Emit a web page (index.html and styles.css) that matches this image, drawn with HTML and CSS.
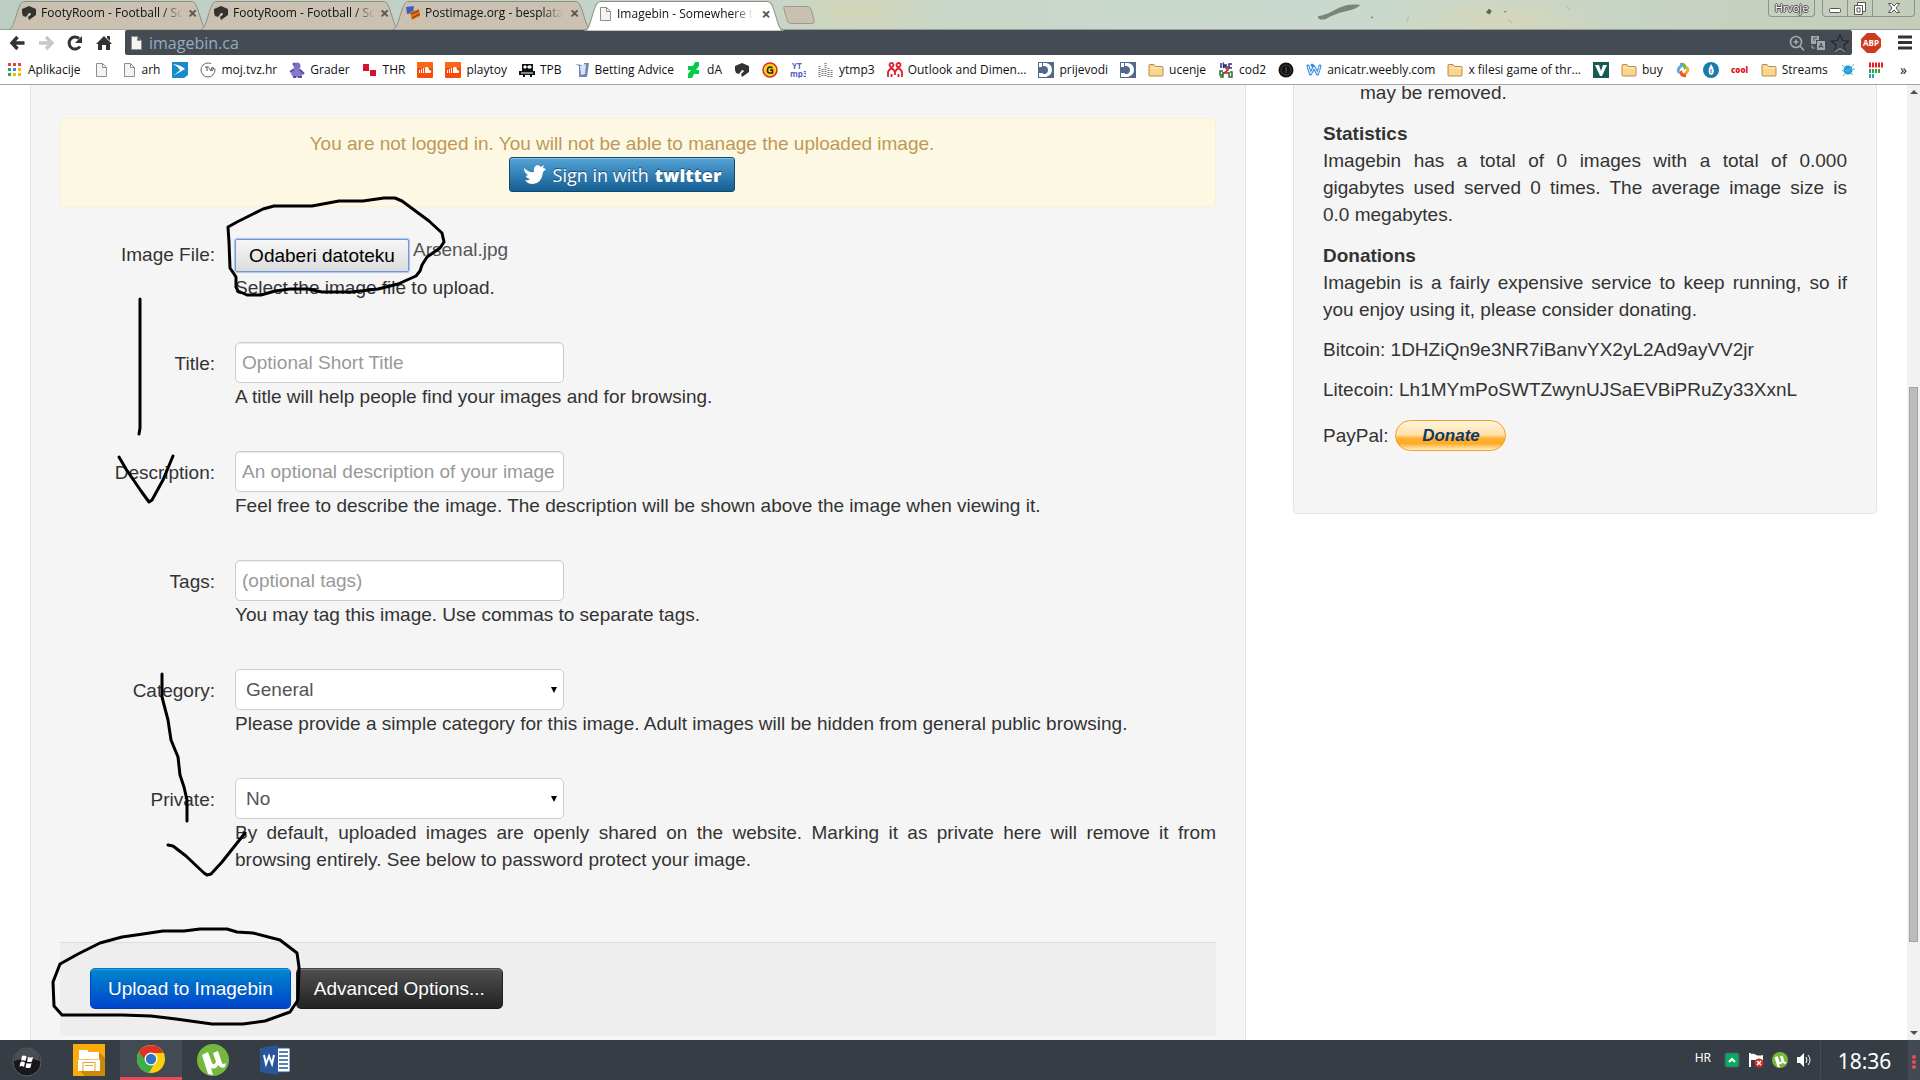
FILE: index.html
```html
<!DOCTYPE html>
<html lang="en">
<head>
<meta charset="utf-8">
<title>Imagebin - Somewhere to Store Random Things</title>
<link rel="stylesheet" href="styles.css">
</head>
<body>
<svg class="defs" aria-hidden="true">
  <symbol id="tab" viewBox="0 0 200 29" preserveAspectRatio="none"><path d="M0 29C5 28 6 21 9 12 12 3 13 .5 17 .5H183C187 .5 188 3 191 12 194 21 195 28 200 29Z"/></symbol>
  <symbol id="page" viewBox="0 0 16 16"><path d="M3.500 1.500H9.500L13.500 5.500V14.500H3.500ZM9.500 1.500V5.500H13.500" fill="#f4f4f4" stroke="#8d8d8d"/></symbol>
  <symbol id="footy" viewBox="0 0 16 16"><path d="M1 4L8 1 15 4V10L8 15 7 12 10 9 8 8 5 12 2 11 1 8Z" fill="#333"/><path d="M8 11L10 9 8 8Z" fill="#ddd"/></symbol>
  <symbol id="cloud" viewBox="0 0 16 16"><rect width="16" height="16" rx="1" fill="#f84a0c"/><path d="M0 0H16V6H0Z" fill="#ff7a22" opacity=".6"/><path d="M8 5.500C11 4 12 6 12 8 15 8 14.500 11 13 11H8ZM6 6H7V11H6ZM4 7H5V11H4ZM2 8H3V11H2Z" fill="#fff"/></symbol>
  <symbol id="folder" viewBox="0 0 16 16"><path d="M1 3.500Q1 2.500 2 2.500H6L7.500 4.500H14Q15 4.500 15 5.500V13Q15 14 14 14H2Q1 14 1 13Z" fill="#fbd58c" stroke="#b98a4c"/><path d="M2 6H14" stroke="#fff0c9"/></symbol>
  <symbol id="prij" viewBox="0 0 16 16"><rect width="16" height="16" fill="#51688c"/><path d="M1 1H4V5H1ZM5 1H8Q14 2 14 8 14 13 8 15H1V11H5V12H7Q10 11 10 8 10 5 7 4H5Z" fill="#fff"/></symbol>
  <symbol id="ut" viewBox="0 0 32 32"><circle cx="16" cy="16" r="16" fill="#76b83f"/><path d="M5 11L11 8 15 19Q17 22 19 18L16 9 21 7 25 19Q26 21 29 19L28 23Q24 25 21 21 19 26 14 24L16 31 11 30Z" fill="#fff"/></symbol>
</svg>

<header class="browser">
  <div class="titlebar">
    <nav class="tabs" aria-label="Tabs">
      <div class="tab"><svg class="shape"><use href="#tab"/></svg><svg class="ico"><use href="#footy"/></svg><span class="tab-title">FootyRoom - Football / Sc</span><button class="close" aria-label="Close tab">×</button></div>
      <div class="tab"><svg class="shape"><use href="#tab"/></svg><svg class="ico"><use href="#footy"/></svg><span class="tab-title">FootyRoom - Football / Sc</span><button class="close" aria-label="Close tab">×</button></div>
      <div class="tab"><svg class="shape"><use href="#tab"/></svg><svg class="ico" viewBox="0 0 16 16"><path d="M1 2L9 1 8 8 2 9Z" fill="#3d5fc4"/><path d="M5 7L14 4 15 11 7 15Z" fill="#d9731c"/><path d="M6 9L14 6M7 13L15 9" stroke="#7b3308"/></svg><span class="tab-title">Postimage.org - besplata</span><button class="close" aria-label="Close tab">×</button></div>
      <div class="tab active"><svg class="shape"><use href="#tab"/></svg><svg class="ico"><use href="#page"/></svg><span class="tab-title">Imagebin - Somewhere t</span><button class="close" aria-label="Close tab">×</button></div>
      <button class="newtab" aria-label="New tab"><svg viewBox="0 0 32 18" width="32" height="18"><path d="M2 .5H24Q27 .5 28 3L31 14Q32 17.500 29 17.500H8Q5 17.500 4 14L1 3Q0 .5 2 .5Z" fill="#c9c0b0" stroke="#9c9a8d"/></svg></button>
    </nav>
    <svg class="grime" viewBox="0 0 640 30" aria-hidden="true"><path d="M28 17Q38 15 46 10 58 3 72 5 70 9 56 12 46 14 36 20 28 21 28 17Z" fill="#7b8577"/><path d="M202 13L205 9 208 11 206 15Z" fill="#59665d"/><path d="M225 20L229 24M285 6L289 10M120 22L122 17" stroke="#a9b5a4"/><circle cx="84" cy="18" r="1" fill="#748071"/><circle cx="222" cy="12" r="1" fill="#748071"/></svg>
    <div class="window-controls">
      <button class="user">Hrvoje</button>
      <div class="wbtns">
        <button aria-label="Minimize"><svg width="14" height="16" viewBox="0 0 14 16"><rect x="1.500" y="8.500" width="11" height="4" rx="1" fill="#fff" stroke="#555"/></svg></button>
        <button aria-label="Restore"><svg width="14" height="16" viewBox="0 0 14 16"><path d="M4.500 2.500H12.500V11.500H4.500Z" fill="#fff" stroke="#555"/><path d="M1.500 5.500H9.500V14.500H1.500ZM4 8H7V12H4Z" fill="#fff" stroke="#555"/></svg></button>
        <button class="wide" aria-label="Close"><svg width="14" height="16" viewBox="0 0 14 16"><path d="M1.500 3.500H4.500L7 6 9.500 3.500H12.500L9 8 12.500 12.500H9.500L7 10 4.500 12.500H1.500L5 8Z" fill="#fff" stroke="#555"/></svg></button>
      </div>
    </div>
  </div>
  <div class="toolbar">
    <button class="nav" aria-label="Back"><svg viewBox="0 0 16 16"><path d="M8.500 2L3 8 8.500 14M3 8H15.500" fill="none" stroke="#333" stroke-width="3.400"/></svg></button>
    <button class="nav" aria-label="Forward"><svg viewBox="0 0 16 16"><path d="M8 2L14 8 8 14M1 8H13" fill="none" stroke="#c8c8c8" stroke-width="3.400"/></svg></button>
    <button class="nav" aria-label="Reload"><svg viewBox="0 0 16 16"><path d="M13 11.500A6 6 0 1 1 12 3.500" fill="none" stroke="#333" stroke-width="3"/><path d="M15 1V8H8Z" fill="#333"/></svg></button>
    <button class="nav" aria-label="Home"><svg viewBox="0 0 16 16"><path d="M8 1L16 9H14V15H10V10H6V15H2V9H0ZM11 1H14V6L11 3Z" fill="#333"/></svg></button>
    <div class="omnibox">
      <svg class="ico"><use href="#page"/></svg>
      <input class="url" type="text" value="imagebin.ca" aria-label="Address">
      <svg class="ico" viewBox="0 0 16 16"><circle cx="7" cy="7" r="5.500" fill="none" stroke="#a5a9ad" stroke-width="1.600"/><path d="M11 11L15 15.500M4.500 7H9.500M7 4.500V9.500" stroke="#a5a9ad" stroke-width="1.600"/></svg>
      <svg class="ico" viewBox="0 0 16 16"><path d="M1 1H9V5H6V9H1ZM7 6H15V15H7Z" fill="#a5a9ad"/><path d="M3 3H7M3 5H5" stroke="#454b53"/><path d="M9 13L11 8 13 13M9.500 11.500H12.500" stroke="#454b53" fill="none"/><path d="M2 10V13H5" stroke="#a5a9ad" fill="none"/></svg>
      <svg class="star" viewBox="0 0 16 16"><path d="M8 .5L10.300 5.800 15.800 6.200 11.500 9.800 13 15.300 8 12.300 3 15.300 4.500 9.800 .2 6.200 5.700 5.800Z" fill="#454b53" stroke="#22262b"/><path d="M3 15.800L8 12.900 13 15.800" fill="none" stroke="#8b9096"/></svg>
    </div>
    <svg class="abp" viewBox="0 0 20 20" role="img" aria-label="ABP"><path d="M6 0H14L20 6V14L14 20H6L0 14V6Z" fill="#ce3a20"/><text x="10" y="13" text-anchor="middle">ABP</text></svg>
    <button class="menu" aria-label="Menu"><svg width="14" height="15" viewBox="0 0 14 15"><path d="M0 2H14M0 7.500H14M0 13H14" stroke="#333" stroke-width="3"/></svg></button>
  </div>
  <nav class="bookmarks" aria-label="Bookmarks">
    <a href="#"><svg viewBox="0 0 16 16"><path d="M1 1H4V4H1ZM6 1H9V4H6ZM11 1H14V4H11Z" fill="#ea4335"/><path d="M1 6H4V9H1ZM1 11H4V14H1Z" fill="#34a053"/><path d="M6 6H9V9H6Z" fill="#4285f4"/><path d="M11 6H14V9H11ZM6 11H9V14H6ZM11 11H14V14H11Z" fill="#fbb505"/></svg>Aplikacije</a>
    <a href="#" aria-label="Bookmark"><svg><use href="#page"/></svg></a>
    <a href="#"><svg><use href="#page"/></svg>arh</a>
    <a href="#" aria-label="Bookmark"><svg viewBox="0 0 16 16"><path d="M0 0H16V13L12 16H0Z" fill="#178ccb"/><path d="M1 2Q9 3 13 7 8 10 1 14 6 10 8 8 5 4 1 2Z" fill="#fff"/></svg></a>
    <a href="#"><svg viewBox="0 0 16 16"><circle cx="8" cy="8" r="7" fill="#fff" stroke="#666" stroke-dasharray="36 6"/><path d="M5 5H9M7 5V9M9 6L11 9 12 5M12 6H14L12 9" fill="none" stroke="#555"/></svg>moj.tvz.hr</a>
    <a href="#"><svg viewBox="0 0 16 16"><circle cx="8" cy="4" r="3.500" fill="#7c70c4"/><circle cx="5" cy="2" r="1.500" fill="#6355ae"/><ellipse cx="8" cy="11" rx="6" ry="4.500" fill="#8579cd"/><path d="M1 10L5 7M11 8L15 12M4 15H7M9 15H13" stroke="#5b4da5" stroke-width="2"/></svg>Grader</a>
    <a href="#"><svg viewBox="0 0 16 16"><path d="M1 2H7V9H1ZM8 8H14V14H8Z" fill="#d3122d"/></svg>THR</a>
    <a href="#" aria-label="SoundCloud"><svg><use href="#cloud"/></svg></a>
    <a href="#"><svg><use href="#cloud"/></svg>playtoy</a>
    <a href="#"><svg viewBox="0 0 16 16"><path d="M3 2H14V9H16V13H13V15H11V13H6V15H4V13H0V9H3Z" fill="#111"/><path d="M5 4H7V6H5ZM9 4H12V6H9ZM2 11H14" fill="#fff" stroke="#fff"/></svg>TPB</a>
    <a href="#"><svg viewBox="0 0 16 16"><path d="M1 2L5 4V15H13L15 1H10L9 6 8 3Z" fill="#7186b5"/><path d="M6 4L7 13 11 12 12 2Z" fill="#dbe4f5"/></svg>Betting Advice</a>
    <a href="#"><svg viewBox="0 0 16 16"><path d="M9 0H13V4L10 8H13V12H8L6 16H2V12L5 8H2V4H7Z" fill="#05cc47"/></svg>dA</a>
    <a href="#" aria-label="FootyRoom"><svg><use href="#footy"/></svg></a>
    <a href="#" aria-label="G"><svg viewBox="0 0 16 16"><circle cx="8" cy="8" r="7" fill="#ffd117" stroke="#d92e13" stroke-width="1.500"/><path d="M10.500 6Q8 4 6 6 4.500 10 7 11H10.500V8H8" fill="none" stroke="#222" stroke-width="1.600"/></svg></a>
    <a href="#" aria-label="YT mp3"><svg viewBox="0 0 16 16" class="ytmp"><text x="2" y="7">YT</text><text x="0" y="15">mp3</text></svg></a>
    <a href="#"><svg viewBox="0 0 16 16"><path d="M1.500 4V15M4.500 7V15M7.500 1V15M10.500 6V15M13.500 8V15" stroke="#777" stroke-width="2" stroke-dasharray="1 1"/></svg>ytmp3</a>
    <a href="#"><svg viewBox="0 0 16 16"><g fill="none" stroke="#e0202b" stroke-width="1.800"><circle cx="4.500" cy="3" r="2"/><circle cx="11.500" cy="3" r="2"/><path d="M1 15V10Q4.500 3 8 10 11.500 3 15 10V15M4.500 15V12M11.500 15V12M8 10V13"/></g></svg>Outlook and Dimen...</a>
    <a href="#"><svg><use href="#prij"/></svg>prijevodi</a>
    <a href="#" aria-label="Prijevodi"><svg><use href="#prij"/></svg></a>
    <a href="#"><svg><use href="#folder"/></svg>ucenje</a>
    <a href="#"><svg viewBox="0 0 16 16"><g fill="none" stroke-width="1.500"><path d="M3 1V6M5.500 6V2L8 6V2M14 2H11V6H14" stroke="#232d87"/><path d="M6 5H10V8L6 11H11" stroke="#c02034"/><path d="M5 9H2V13H5V10M5 13V15H2M12 10H14V15H11V10" stroke="#25702d"/></g></svg>cod2</a>
    <a href="#" aria-label="Bookmark"><svg viewBox="0 0 16 16"><circle cx="8" cy="8" r="7.500" fill="#111"/><circle cx="8" cy="8" r="5" fill="none" stroke="#444"/><path d="M8 5V11" stroke="#666"/></svg></a>
    <a href="#"><svg viewBox="0 0 16 16"><path d="M2 4L4.500 12 8 5 11.500 12 14 4M8 5L6 3" fill="none" stroke="#2c8be0" stroke-width="3" stroke-linecap="round" stroke-linejoin="round"/><path d="M2 4L4.500 12 8 5 11.500 12 14 4" fill="none" stroke="#fff"/></svg>anicatr.weebly.com</a>
    <a href="#"><svg><use href="#folder"/></svg>x filesi game of thr...</a>
    <a href="#" aria-label="V"><svg viewBox="0 0 16 16"><rect width="16" height="16" fill="#165a55"/><path d="M2 3H6L8 9 10 3H14L9 14H7Z" fill="#fff"/></svg></a>
    <a href="#"><svg><use href="#folder"/></svg>buy</a>
    <a href="#" aria-label="Bookmark"><svg viewBox="0 0 16 16"><path d="M5 1Q11 0 12 6L9 8Q9 4 5 4Z" fill="#7ab648"/><path d="M12 4Q16 7 13 11L9 15 8 12 11 9Z" fill="#f6a623"/><path d="M11 15Q5 16 4 10L7 8Q7 12 11 12Z" fill="#e85a2a"/><path d="M4 12Q0 9 3 5L7 1 8 4 5 7Z" fill="#5ba5dc"/></svg></a>
    <a href="#" aria-label="Bookmark"><svg viewBox="0 0 16 16"><circle cx="8" cy="8" r="8" fill="#1a7bb0"/><path d="M8 2Q14 11 8 13 3 11 8 2Z" fill="#fff"/><path d="M8 7V11" stroke="#1a7bb0"/></svg></a>
    <a href="#" aria-label="cool"><svg viewBox="0 0 18 16" class="cool"><text x="0" y="11">cool</text></svg></a>
    <a href="#"><svg><use href="#folder"/></svg>Streams</a>
    <a href="#" aria-label="Bookmark"><svg viewBox="0 0 16 16"><circle cx="8" cy="8" r="4.500" fill="#159bd3"/><path d="M2 3L13 13M14 2L3 14M2 9L15 7" stroke="#4fb6df"/></svg></a>
    <a href="#" aria-label="Bookmark"><svg viewBox="0 0 16 16"><path d="M1 3H15" stroke="#e3202b" stroke-width="5" stroke-dasharray="2 1"/><path d="M1 9H12" stroke="#39a63b" stroke-width="4" stroke-dasharray="2 1"/><path d="M1 14H6" stroke="#2a9fd0" stroke-width="4" stroke-dasharray="2 1"/></svg></a>
    <a href="#" class="more">»</a>
  </nav>
</header>

<main class="viewport">
  <section class="well main">
    <div class="alert">
      <p>You are not logged in. You will not be able to manage the uploaded image.</p>
      <button class="twitter"><svg viewBox="0 0 24 22" width="24" height="22"><path d="M1 4Q6 9 11 8 10 3 14 1 16 1 18 3L21 1 20 4 23 5 20 8Q19 19 10 20 4 20 2 16 5 17 7 15 3 14 3 12L5 11Q1 9 1 4Z" fill="#fff"/></svg><span>Sign in with</span><strong>twitter</strong></button>
    </div>
    <form onsubmit="return false">
      <div class="row"><label for="file">Image File:</label><div class="field"><div class="file"><button type="button" id="file">Odaberi datoteku</button><span>Arsenal.jpg</span></div><p>Select the image file to upload.</p></div></div>
      <div class="row"><label for="title">Title:</label><div class="field"><input id="title" type="text" placeholder="Optional Short Title"><p>A title will help people find your images and for browsing.</p></div></div>
      <div class="row"><label for="desc">Description:</label><div class="field"><input id="desc" type="text" placeholder="An optional description of your image"><p>Feel free to describe the image. The description will be shown above the image when viewing it.</p></div></div>
      <div class="row"><label for="tags">Tags:</label><div class="field"><input id="tags" type="text" placeholder="(optional tags)"><p>You may tag this image. Use commas to separate tags.</p></div></div>
      <div class="row"><label for="cat">Category:</label><div class="field"><div class="select"><select id="cat"><option>General</option></select></div><p>Please provide a simple category for this image. Adult images will be hidden from general public browsing.</p></div></div>
      <div class="row"><label for="priv">Private:</label><div class="field"><div class="select"><select id="priv"><option>No</option></select></div><p>By default, uploaded images are openly shared on the website. Marking it as private here will remove it from browsing entirely. See below to password protect your image.</p></div></div>
      <div class="actions"><button class="btn primary">Upload to Imagebin</button><button class="btn inverse" type="button">Advanced Options...</button></div>
    </form>
  </section>
  <aside class="well side">
    <p class="rule">may be removed.</p>
    <h2>Statistics</h2>
    <p>Imagebin has a total of 0 images with a total of 0.000 gigabytes used served 0 times. The average image size is 0.0&nbsp;megabytes.</p>
    <h2>Donations</h2>
    <p>Imagebin is a fairly expensive service to keep running, so if you enjoy using it, please consider donating.</p>
    <p>Bitcoin: 1DHZiQn9e3NR7iBanvYX2yL2Ad9ayVV2jr</p>
    <p>Litecoin: Lh1MYmPoSWTZwynUJSaEVBiPRuZy33XxnL</p>
    <div class="paypal"><span>PayPal:</span><button class="donate">Donate</button></div>
  </aside>
  <div class="scrollbar" aria-hidden="true"><i class="up"></i><span class="before"></span><span class="thumb"></span><span class="after"></span><i class="down"></i></div>
</main>

<footer class="taskbar">
  <div class="apps">
    <button class="app start" aria-label="Start"><svg width="30" height="30" viewBox="0 0 30 30"><circle cx="15" cy="15" r="14" fill="#16181b" stroke="#5c6065"/><path d="M2 14A13 13 0 0 1 28 14Q15 9 2 14Z" fill="#4a4d51"/><path d="M10 9Q12 8 14.500 9.500L13.500 14Q11 13 9 13.500ZM16 10Q18 11 21 10L20 14.500Q17 15.500 15 14.500ZM8.500 15Q11 14 13 15.500L12 20Q10 18.500 7.500 19.500ZM14.500 16Q17 17 19.500 16L18.500 20.500Q15.500 21.500 13.500 20.500Z" fill="#fff"/></svg></button>
    <button class="app" aria-label="Files"><svg width="32" height="32" viewBox="0 0 32 32"><path d="M0 0H32V32H0Z" fill="#fbac0c"/><path d="M27 9L32 14V32H12L6 26Z" fill="#ca8907"/><path d="M6 6H15V8H26V15H6Z" fill="#fff"/><path d="M5 16H27V27H5Z" fill="#fff"/><path d="M5 15.500H27" stroke="#f0c36b"/><path d="M10 27V18.500H22V27M12 21.500H20" fill="none" stroke="#e3a12b"/></svg></button>
    <button class="app open" aria-label="Chrome"><svg width="28" height="28" viewBox="0 0 28 28"><circle cx="14" cy="14" r="14" fill="#fdd109"/><path d="M14 14L2 7A14 14 0 0 0 12 28L18 17Z" fill="#3fae49"/><path d="M2 7A14 14 0 0 1 26.500 8H14L8 15Z" fill="#de3226"/><circle cx="14" cy="14" r="6.500" fill="#fff"/><circle cx="14" cy="14" r="5.200" fill="#2f75c1"/></svg></button>
    <button class="app" aria-label="uTorrent"><svg width="32" height="32"><use href="#ut"/></svg></button>
    <button class="app" aria-label="Word"><svg width="30" height="30" viewBox="0 0 30 30"><path d="M16 3H30V27H16Z" fill="#fff" stroke="#2b579a"/><path d="M19 7H28M19 11H28M19 15H28M19 19H28M19 23H28" stroke="#2b579a" stroke-width="1.600"/><path d="M0 3L18 0V30L0 27Z" fill="#2b579a"/><path d="M4 10L6 19 9 11 12 19 14 10" fill="none" stroke="#fff" stroke-width="2"/></svg></button>
  </div>
  <div class="tray">
    <span class="lang">HR</span>
    <svg viewBox="0 0 16 16"><rect x="1" y="1" width="14" height="14" rx="2" fill="#08ab64" stroke="#545b63"/><path d="M5 10L8 7 11 10" fill="none" stroke="#fff" stroke-width="2"/></svg>
    <svg viewBox="0 0 16 16"><path d="M2 1V15" stroke="#fff" stroke-width="2"/><path d="M3 2Q6 1 8 3 11 4 15 3V8Q10 10 7 8L3 8Z" fill="#fff"/><circle cx="11" cy="11" r="4.500" fill="#d62d23"/><path d="M9 9L13 13M13 9L9 13" stroke="#fff" stroke-width="1.500"/></svg>
    <svg><use href="#ut"/></svg>
    <svg viewBox="0 0 16 16"><path d="M1 5H4L8 1V15L4 11H1Z" fill="#fff"/><path d="M10 5Q12 8 10 11M12 3Q16 8 12 13" fill="none" stroke="#fff"/></svg>
    <time>18:36</time>
    <span class="dots"><i></i><i></i><i></i></span>
  </div>
</footer>

<svg class="ink" viewBox="0 0 1920 1080" aria-hidden="true">
  <path d="M312 206L339 201 363 201 384 198 395 198 402 201 429 221 442 233 444 242 440 248 427 257 422 265 420 271 416 276 398 284 378 289 351 292 322 292 308 289 290 289 275 291 261 295 247 295 238 291 236 287 236 277 230 268 229 242 228 227 237 222 253 214 263 209 274 206Z"/>
  <path d="M140 299V428L139 434M119 457L126 469 141 491 149 502 152 500 163 480 173 456"/>
  <path d="M162 674V697L168 720 171 740 178 757 180 775 184 787 187 800V821M168 845L173 846 186 856 204 873 207 875 211 874 222 862 245 833"/>
  <path d="M62 1015L54 1006 53 982 60 964 78 954 100 943 122 937 143 934 163 931 184 931 200 929H227L237 932 253 933 280 940 297 953 299 967 298 1000 290 1012 265 1021 243 1024H212L176 1019 151 1016 122 1015Z"/>
</svg>
</body>
</html>
```
FILE: styles.css
```css
* { box-sizing: border-box; }
body {
  margin: 0;
  height: 100vh;
  display: flex;
  flex-direction: column;
  overflow: hidden;
  position: relative;
  background: #fff;
  color: #333;
  font: 19px/27px "Liberation Sans", Arial, sans-serif;
}
button, input, select { font: inherit; color: inherit; margin: 0; }
button { padding: 0; border: 0; background: none; }
p, h2 { margin: 0; }
.defs { position: absolute; width: 0; height: 0; }
svg { flex: none; display: block; }

/* Browser frame */
.browser { font: 12px/16px "Open Sans", "Noto Sans", sans-serif; color: #111; flex: none; }
.titlebar {
  height: 30px;
  display: flex;
  justify-content: space-between;
  padding-left: 8px;
  border-bottom: 1px solid #9a9f96;
  background:
    radial-gradient(ellipse 90px 24px at 860px 12px, #d3d5b4, transparent),
    radial-gradient(ellipse 120px 30px at 1500px 20px, #d5d6ba, transparent),
    linear-gradient(90deg, #bccdc4, #c8d6c9 45%, #cad9cf 70%, #c4cdb9);
  position: relative;
}
.tabs { display: flex; }
.tab {
  width: 200px;
  height: 29px;
  margin: 1px -8px 0 0;
  padding: 0 6px 5px 13px;
  display: flex;
  align-items: center;
  position: relative;
}
.shape { position: absolute; inset: 0; width: 100%; height: 100%; fill: #cac1b0; stroke: #918f84; }
.active { z-index: 1; height: 30px; }
.active .shape { fill: #fff; }
.tab > * { z-index: 1; }
.tab > .shape { z-index: 0; }
.ico, .star { width: 16px; height: 16px; }
.star { width: 18px; height: 18px; }
.tab-title {
  flex: 1;
  margin-left: 4px;
  white-space: nowrap;
  -webkit-mask-image: linear-gradient(90deg, #000 85%, transparent);
  mask-image: linear-gradient(90deg, #000 85%, transparent);
}
.close { width: 24px; font-size: 16px; font-weight: 700; color: #555; }
.newtab { margin: 6px 0 0 7px; align-self: flex-start; }
.grime { position: absolute; right: 0; top: 0; width: 640px; height: 29px; }
.window-controls { display: flex; gap: 7px; padding-right: 5px; position: relative; align-items: flex-start; }
.user, .wbtns { height: 17px; border: 1px solid #8b948b; border-top: 0; border-radius: 0 0 4px 4px; }
.user { width: 47px; font-size: 11px; line-height: 16px; color: #fff; text-shadow: 1px 0 #444, -1px 0 #444, 0 1px #444, 0 -1px #444; }
.wbtns { display: flex; }
.wbtns button { width: 25px; display: flex; justify-content: center; border-right: 1px solid #8b948b; }
.wbtns .wide { width: 41px; border: 0; }
.toolbar { display: flex; align-items: center; height: 25px; padding-left: 9px; }
.nav { width: 16px; margin-right: 13px; }
.nav svg { width: 16px; height: 16px; }
.omnibox {
  flex: 1;
  height: 25px;
  display: flex;
  align-items: center;
  gap: 5px;
  padding: 0 3px;
  background: #454b53;
  border-radius: 2px;
}
.url { flex: 1; min-width: 0; border: 0; padding: 0; background: none; color: #93adc2; font-size: 16px; height: 24px; }
.abp { width: 20px; height: 20px; margin: 0 17px 0 9px; }
.abp text { font: 700 8px "Open Sans", sans-serif; fill: #fff; }
.menu { margin-right: 8px; }
.bookmarks {
  height: 30px;
  display: flex;
  align-items: center;
  gap: 12px;
  padding: 0 13px 0 7px;
  border-bottom: 1px solid #a3a3a3;
  white-space: nowrap;
  overflow: hidden;
}
.bookmarks a { display: flex; align-items: center; gap: 5px; color: #111; text-decoration: none; }
.bookmarks svg { width: 16px; height: 16px; }
.bookmarks .more { margin-left: auto; font-size: 14px; }
.bookmarks .cool { width: 18px; overflow: visible; }
.ytmp text { font: 700 8px "Open Sans", sans-serif; fill: #4f63b8; }
.cool text { font: 800 8px "Open Sans", sans-serif; fill: #e3131e; }

/* Page */
.viewport {
  flex: 1;
  min-height: 0;
  overflow: hidden;
  display: grid;
  grid-template-columns: minmax(0, 1216fr) 47px minmax(0, 584fr) 30px 13px;
  padding-left: 30px;
}
.well { background: #f5f5f5; border: 1px solid #e3e3e3; border-top: 0; }
.main { grid-column: 1; padding: 33px 29px 4px; border-bottom: 0; text-align: justify; }
.alert {
  height: 89px;
  padding: 11px 34px 0 2px;
  display: flex;
  flex-direction: column;
  align-items: center;
  background: #fcf8e3;
  border: 1px solid #fbeed5;
  border-radius: 5px;
  color: #c09853;
  text-shadow: 0 1px 0 rgba(255, 255, 255, .5);
}
.twitter {
  width: 226px;
  height: 35px;
  display: flex;
  align-items: center;
  justify-content: center;
  gap: 6px;
  border: 1px solid #0e4a69;
  border-radius: 3px;
  background: linear-gradient(#55a3d6, #145f94);
  box-shadow: inset 0 1px #8ec4e6;
  color: #fff;
  font: 18px/24px "Open Sans", sans-serif;
  text-shadow: 0 -1px 1px #15496d;
}
.twitter strong { font-weight: 800; }
form { padding-top: 26px; }
.row { display: flex; gap: 20px; padding-bottom: 41px; }
.row label { width: 155px; padding-top: 8px; text-align: right; flex: none; }
.field { flex: 1; min-width: 0; }
.file { height: 41px; padding-top: 6px; display: flex; align-items: flex-start; gap: 4px; color: #555; }
.file button {
  width: 174px;
  height: 33px;
  border: 1px solid #6f97da;
  border-radius: 2px;
  background: linear-gradient(#f6f6f6, #dcdcdc);
  box-shadow: 0 0 1px 1px #a9c3ee;
  color: #000;
}
.file span { margin-top: -3px; }
.field input, .select { width: 329px; height: 41px; }
.field input, .select select {
  display: block;
  border: 1px solid #ccc;
  border-radius: 5px;
  background: #fff;
  color: #555;
  padding: 0 6px;
}
.field input { box-shadow: inset 0 1px 1px rgba(0, 0, 0, .08); }
.field input::placeholder { color: #999; opacity: 1; }
.select { position: relative; }
.select select { width: 100%; height: 100%; padding: 0 10px; appearance: none; }
.select::after {
  content: "";
  position: absolute;
  right: 7px;
  top: 18px;
  border: 3px solid transparent;
  border-top: 6px solid #000;
  border-bottom: 0;
}
.actions {
  margin-top: 28px;
  height: 94px;
  padding: 25px 30px 0;
  display: flex;
  align-items: flex-start;
  gap: 5px;
  background: #eee;
  border-top: 1px solid #ddd;
}
.btn { height: 41px; padding: 0 17px; border: 1px solid; border-radius: 5px; color: #fff; text-shadow: 0 -1px 0 rgba(0, 0, 0, .25); box-shadow: inset 0 1px 0 rgba(255, 255, 255, .2); white-space: nowrap; }
.primary { background: linear-gradient(#08c, #04c); border-color: #0074cc #04c #003fa8; }
.inverse { background: linear-gradient(#505050, #222); border-color: #444 #222 #181818; }

.side {
  grid-column: 3;
  align-self: start;
  height: 429px;
  padding: 0 29px;
  border-radius: 0 0 5px 5px;
  text-align: justify;
}
.side p { margin-bottom: 13px; }
.side h2 { font-size: 19px; line-height: 27px; padding-top: 1px; }
.side .rule { margin-top: -6px; padding-left: 37px; }
.paypal { display: flex; align-items: center; gap: 7px; padding-top: 4px; }
.donate {
  width: 111px;
  height: 31px;
  border: 1px solid #ff9a1c;
  border-radius: 16px;
  background: linear-gradient(#fff6e0, #ffe0a6 48%, #ffb02f 60%, #ffab27 78%, #fff0cf);
  color: #0d3a66;
  font: italic 700 17px/24px "Liberation Sans", sans-serif;
}
.scrollbar { grid-column: 5; background: #f1f1f1; display: flex; flex-direction: column; align-items: center; padding: 5px 0; }
.scrollbar i { border: 4px solid transparent; height: 0; }
.scrollbar .up { border-top: 0; border-bottom: 4px solid #505050; }
.scrollbar .down { border-bottom: 0; border-top: 4px solid #505050; }
.before { flex: 294; }
.thumb { flex: 554; width: 9px; background: #bcbcbc; border: 1px solid #a3a3a3; }
.after { flex: 89; }

/* Taskbar */
.taskbar { flex: none; height: 40px; display: flex; justify-content: space-between; background: #373d45; font-family: "Noto Sans", sans-serif; color: #fff; }
.apps { display: flex; }
.app { width: 54px; display: flex; justify-content: center; align-items: center; }
.app.start { width: 58px; padding: 4px 4px 0 0; }
.app + .app { width: 62px; }
.app.open { background: #424a54; border-bottom: 3px solid #ee4a55; }
.tray { display: flex; align-items: center; gap: 8px; }
.tray svg { width: 16px; height: 16px; }
.lang { font-size: 12px; margin: -4px 5px 0 0; line-height: 16px; }
.tray time { font-size: 21px; width: 88px; margin-right: -8px; padding-top: 2px; line-height: 36px; border-left: 1px solid #454c56; text-align: center; }
.dots { width: 12px; height: 40px; display: flex; flex-direction: column; align-items: center; justify-content: center; gap: 1px; background: #424854; padding-top: 4px; }
.dots i { width: 4px; height: 4px; border-radius: 2px; background: #ef4b57; }

/* Freehand marks over the page */
.ink { position: absolute; left: 0; top: 0; width: 1920px; height: 1080px; pointer-events: none; fill: none; stroke: #000; stroke-width: 3; stroke-linejoin: round; stroke-linecap: round; }
```
